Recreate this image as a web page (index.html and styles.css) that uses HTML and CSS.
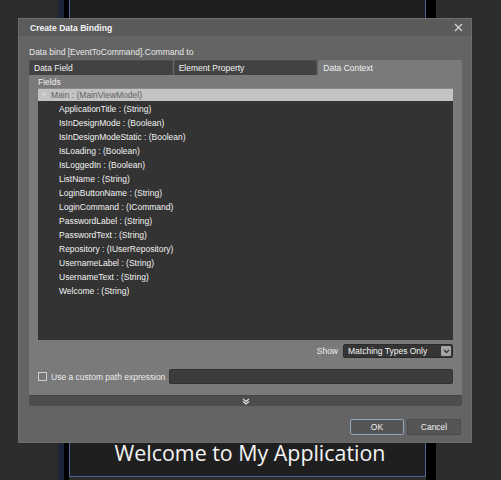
FILE: index.html
```html
<!DOCTYPE html>
<html>
<head>
<meta charset="utf-8">
<link rel="stylesheet" href="styles.css">
</head>
<body>
<div class="screen">
  <div class="app">
    <div class="strip-navy"></div>
    <div class="strip-black"></div>
    <div class="canvas">
      <div class="welcome">Welcome to My Application</div>
    </div>
    <div class="strip-black right"></div>
  </div>

  <div class="dialog">
    <div class="titlebar">
      <span class="title">Create Data Binding</span>
      <svg class="close" width="9" height="9" viewBox="0 0 9 9"><path d="M1 1L8 8M8 1L1 8" stroke="#d0d0d0" stroke-width="1.4"/></svg>
    </div>
    <div class="dbody">
      <div class="subtitle">Data bind [EventToCommand].Command to</div>
      <div class="tabs">
        <div class="tab">Data Field</div>
        <div class="tab">Element Property</div>
        <div class="tab active">Data Context</div>
      </div>
      <div class="panel">
        <div class="inner">
          <div class="fields-label">Fields</div>
          <div class="list">
            <div class="root"><span class="tri"></span>Main : (MainViewModel)</div>
            <div class="item">ApplicationTitle : (String)</div>
            <div class="item">IsInDesignMode : (Boolean)</div>
            <div class="item">IsInDesignModeStatic : (Boolean)</div>
            <div class="item">IsLoading : (Boolean)</div>
            <div class="item">IsLoggedIn : (Boolean)</div>
            <div class="item">ListName : (String)</div>
            <div class="item">LoginButtonName : (String)</div>
            <div class="item">LoginCommand : (ICommand)</div>
            <div class="item">PasswordLabel : (String)</div>
            <div class="item">PasswordText : (String)</div>
            <div class="item">Repository : (IUserRepository)</div>
            <div class="item">UsernameLabel : (String)</div>
            <div class="item">UsernameText : (String)</div>
            <div class="item">Welcome : (String)</div>
          </div>
          <div class="show-row">
            <span class="show-label">Show</span>
            <div class="select">
              <span>Matching Types Only</span>
              <span class="sel-btn"><svg width="7" height="5" viewBox="0 0 7 5"><path d="M1 1L3.5 3.5L6 1" stroke="#333" stroke-width="1.4" fill="none"/></svg></span>
            </div>
          </div>
          <div class="path-row">
            <span class="check"></span>
            <span class="path-label">Use a custom path expression</span>
            <div class="path-input"></div>
          </div>
        </div>
        <div class="expander">
          <svg width="8" height="7" viewBox="0 0 8 7"><path d="M1 1L4 3.5L7 1M1 3.5L4 6L7 3.5" stroke="#e0e0e0" stroke-width="1.2" fill="none"/></svg>
        </div>
      </div>
      <div class="buttons">
        <div class="btn ok">OK</div>
        <div class="btn">Cancel</div>
      </div>
    </div>
  </div>
</div>
</body>
</html>
```

FILE: styles.css
```css
html, body {
  margin: 0;
  padding: 0;
}
body {
  background: #2c2c2c;
  font-family: "Liberation Sans", Arial, sans-serif;
  font-size: 8.5px;
}
.screen {
  position: relative;
  width: 501px;
  height: 480px;
  overflow: hidden;
  background: #2d2d2d;
}
.app {
  display: flex;
  margin-left: 58px;
  width: 378px;
  height: 480px;
}
.strip-navy {
  width: 6px;
  background: #1d2638;
}
.strip-black {
  width: 5px;
  background: #000;
}
.strip-black.right {
  width: 10px;
}
.canvas {
  flex: 1;
  height: 477px;
  box-sizing: border-box;
  border: 1px solid #4b6594;
  border-top: none;
  background: #1f1f1f;
  display: flex;
  align-items: flex-end;
  justify-content: center;
}
.welcome {
  font-family: "Open Sans", "Noto Sans", sans-serif;
  font-size: 21.4px;
  color: #f4f4f4;
  margin-bottom: 9px;
  margin-left: 5px;
  line-height: 28px;
}
.dialog {
  position: absolute;
  left: 18px;
  top: 18px;
  width: 454px;
  height: 425px;
  box-sizing: border-box;
  background: #646464;
  border: 1px solid #6c6c6c;
  border-top-color: #707070;
  color: #f0f0f0;
}
.titlebar {
  height: 17px;
  background: #5b5b5b;
  display: flex;
  align-items: center;
  justify-content: space-between;
  padding: 0 8px 0 11px;
}
.title {
  font-weight: bold;
  color: #f4f4f4;
  font-size: 8.6px;
}
.close {
  display: block;
}
.dbody {
  padding: 0 9px 0 10px;
}
.subtitle {
  margin-top: 10px;
  height: 12px;
  line-height: 12px;
  color: #e8e8e8;
}
.tabs {
  margin-top: 2px;
  display: flex;
  gap: 1px;
  height: 15px;
}
.tab {
  flex: 1;
  background: #424242;
  border: 1px solid #4c4c4c;
  border-bottom: none;
  border-radius: 2px 2px 0 0;
  line-height: 14px;
  padding-left: 4px;
  color: #f2f2f2;
}
.tab.active {
  background: #7a7a7a;
  border-color: #7a7a7a;
}
.panel {
  background: #7a7a7a;
  height: 331px;
  display: flex;
  flex-direction: column;
  border-radius: 0 0 2px 2px;
}
.inner {
  flex: 1;
  padding: 0 9px;
}
.fields-label {
  height: 13px;
  line-height: 14px;
  color: #f0f0f0;
}
.list {
  background: #333333;
  height: 252px;
  border-top: 1px solid #8a8a8a;
  box-sizing: border-box;
}
.root {
  height: 12px;
  line-height: 12px;
  background: #c3c3c3;
  color: #626262;
  padding-left: 4px;
  display: flex;
  align-items: center;
}
.tri {
  width: 0;
  height: 0;
  border-left: 2.5px solid transparent;
  border-right: 2.5px solid transparent;
  border-top: 4px solid #d9d9d9;
  margin-right: 5px;
}
.item {
  height: 14px;
  line-height: 14px;
  padding-left: 21px;
  color: #f2f2f2;
}
.root + .item {
  margin-top: 1px;
}
.show-row {
  display: flex;
  justify-content: flex-end;
  align-items: center;
  margin-top: 4px;
  height: 14px;
  gap: 5px;
}
.show-label {
  color: #ececec;
}
.select {
  width: 110px;
  height: 14px;
  box-sizing: border-box;
  background: #353535;
  border: 1px solid #2a2a2a;
  border-radius: 2px;
  display: flex;
  align-items: center;
  justify-content: space-between;
  padding-left: 4px;
  color: #f4f4f4;
}
.sel-btn {
  width: 10px;
  height: 10px;
  margin-right: 1px;
  background: #a4a4a4;
  border-radius: 1px;
  display: flex;
  align-items: center;
  justify-content: center;
}
.path-row {
  display: flex;
  align-items: center;
  margin-top: 11px;
  height: 15px;
}
.check {
  width: 7px;
  height: 7px;
  border: 1px solid #d0d0d0;
  margin-right: 4px;
  background: #777;
}
.path-label {
  color: #ececec;
  margin-right: 4px;
  white-space: nowrap;
}
.path-input {
  flex: 1;
  height: 15px;
  background: #3c3c3c;
  border: 1px solid #333;
  box-sizing: border-box;
  border-radius: 2px;
}
.expander {
  height: 10px;
  background: #4d4d4d;
  border-top: 1px solid #444;
  border-radius: 0 0 2px 2px;
  display: flex;
  justify-content: center;
  align-items: center;
}
.expander svg {
  display: block;
  margin-left: 1px;
}
.buttons {
  display: flex;
  justify-content: flex-end;
  gap: 3px;
  margin-top: 13px;
  padding-right: 1px;
}
.btn {
  width: 52px;
  height: 14px;
  line-height: 14px;
  text-align: center;
  background: #555555;
  border: 1px solid #4a4a4a;
  border-radius: 2px;
  color: #f0f0f0;
}
.btn.ok {
  border-color: #92a8bf;
}
```
